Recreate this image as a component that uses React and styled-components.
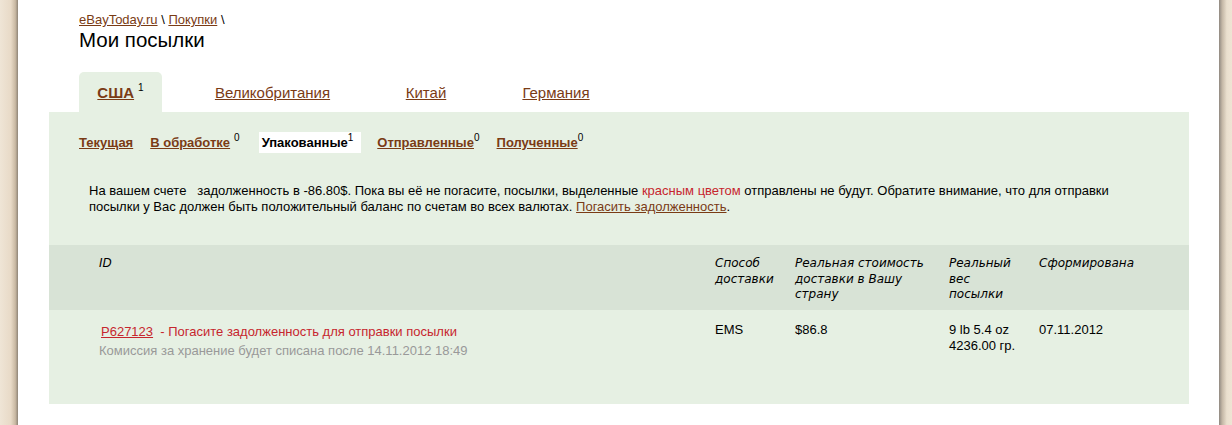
import React from 'react'
import styled, { createGlobalStyle } from 'styled-components'

const Global = createGlobalStyle`
  html, body { margin: 0; padding: 0; }
  body {
    font-family: "Liberation Sans", Arial, sans-serif;
    background: #ece0cf;
    width: 1232px;
    height: 425px;
    overflow: hidden;
  }
`

const Frame = styled.div`
  display: flex;
  height: 425px;
`

const Wood = styled.div`
  width: ${p => p.w}px;
  flex: none;
  background: linear-gradient(90deg, ${p => p.side === 'left'
    ? '#efe5d6 0%, #e8dac7 60%, #c9b9a3 85%, #8e8477 100%'
    : '#8f8880 0%, #c4b7a6 25%, #eadfce 60%, #efe4d4 100%'});
`

const Page = styled.div`
  flex: 1;
  background: #fff;
  padding: 12px 30px 0 31px;
`

const Crumbs = styled.div`
  font-size: 13px;
  color: #000;
  padding-left: 30px;
  line-height: 15px;
`

const Link = styled.a`
  color: ${p => p.red ? '#c6262e' : '#7a3b15'};
  text-decoration: underline;
  font-weight: ${p => p.bold ? 'bold' : 'inherit'};
  cursor: pointer;
`

const Title = styled.h1`
  margin: 1px 0 0;
  padding-left: 30px;
  font-size: 20.5px;
  font-weight: normal;
  line-height: 24px;
  color: #000;
`

const Tabs = styled.div`
  display: flex;
  margin-top: 20px;
  padding-left: 30px;
  height: 40px;
`

const Tab = styled.div`
  width: ${p => p.w}px;
  flex: none;
  display: flex;
  justify-content: center;
  align-items: flex-start;
  padding-top: 12px;
  box-sizing: border-box;
  font-size: 15px;
  line-height: 18px;
  background: ${p => p.active ? '#e6f0e3' : 'transparent'};
  border-radius: 5px 5px 0 0;
`

const Sup = styled.span`
  font-size: 10px;
  line-height: 10px;
  color: #000;
  font-weight: normal;
  margin-left: ${p => p.gap || 0}px;
  margin-top: ${p => p.top || 0}px;
`

const Panel = styled.div`
  background: #e6f0e3;
  height: 292px;
  display: flex;
  flex-direction: column;
`

const SubTabs = styled.div`
  display: flex;
  align-items: center;
  padding: 20px 0 0 30px;
  gap: 17px;
  font-size: 13px;
  font-weight: bold;
`

const SubTab = styled.div`
  display: flex;
  align-items: flex-start;
  height: 21px;
  line-height: 21px;
  padding: ${p => p.active ? '0 8px 0 3px' : '0'};
  background: ${p => p.active ? '#fff' : 'transparent'};
  color: #000;
  margin: ${p => p.active ? '0 -1px 0 2px' : '0'};
`

const Notice = styled.p`
  margin: 30px 0 0;
  padding: 0 64px 0 40px;
  font-size: 13px;
  line-height: 16px;
  color: #000;
`

const Red = styled.span`
  color: #c6262e;
`

const Grid = styled.div`
  display: grid;
  grid-template-columns: 666px 80px 154px 90px 1fr;
`

const HeadRow = styled(Grid)`
  margin-top: 30px;
  background: #d8e3d6;
  height: 65px;
  padding-top: 11px;
  box-sizing: border-box;
`

const HeadCell = styled.div`
  font-family: "DejaVu Sans", Verdana, sans-serif;
  font-style: italic;
  font-size: 12px;
  line-height: 15.5px;
  color: #000;
  padding-left: ${p => p.first ? 50 : 0}px;
  padding-right: ${p => p.pr || 6}px;
`

const BodyRow = styled(Grid)`
  padding-top: 12px;
`

const Cell = styled.div`
  font-size: 13px;
  line-height: 16px;
  color: #000;
  padding-left: ${p => p.first ? 52 : 0}px;
  padding-top: ${p => p.first ? 2 : 0}px;
`

const Gray = styled.div`
  color: #999;
  margin: 3px 0 0 -2px;
`

export default function App() {
  return (
    <>
      <Global />
      <Frame>
        <Wood w={18} side="left" />
        <Page>
          <Crumbs>
            <Link>eBayToday.ru</Link> \ <Link>Покупки</Link> \
          </Crumbs>
          <Title>Мои посылки</Title>
          <Tabs>
            <Tab w={83} active>
              <Link bold>США</Link><Sup gap={4} top={-1}>1</Sup>
            </Tab>
            <Tab w={221}><Link>Великобритания</Link></Tab>
            <Tab w={86}><Link>Китай</Link></Tab>
            <Tab w={174}><Link>Германия</Link></Tab>
          </Tabs>
          <Panel>
            <SubTabs>
              <SubTab><Link>Текущая</Link></SubTab>
              <SubTab><Link>В обработке</Link><Sup gap={4} top={1}>0</Sup></SubTab>
              <SubTab active>Упакованные<Sup top={1}>1</Sup></SubTab>
              <SubTab><Link>Отправленные</Link><Sup top={1}>0</Sup></SubTab>
              <SubTab><Link>Полученные</Link><Sup top={1}>0</Sup></SubTab>
            </SubTabs>
            <Notice>
              На вашем счете &nbsp; задолженность в -86.80$. Пока вы её не погасите, посылки, выделенные{' '}
              <Red>красным цветом</Red> отправлены не будут. Обратите внимание, что для отправки
              посылки у Вас должен быть положительный баланс по счетам во всех валютах.{' '}
              <Link>Погасить задолженность</Link>.
            </Notice>
            <HeadRow>
              <HeadCell first>ID</HeadCell>
              <HeadCell>Способ доставки</HeadCell>
              <HeadCell>Реальная стоимость доставки в Вашу страну</HeadCell>
              <HeadCell pr={20}>Реальный вес посылки</HeadCell>
              <HeadCell>Сформирована</HeadCell>
            </HeadRow>
            <BodyRow>
              <Cell first>
                <Red><Link red>P627123</Link>&nbsp; - Погасите задолженность для отправки посылки</Red>
                <Gray>Комиссия за хранение будет списана после 14.11.2012 18:49</Gray>
              </Cell>
              <Cell>EMS</Cell>
              <Cell>$86.8</Cell>
              <Cell>9 lb 5.4 oz<br />4236.00 гр.</Cell>
              <Cell>07.11.2012</Cell>
            </BodyRow>
          </Panel>
        </Page>
        <Wood w={13} side="right" />
      </Frame>
    </>
  )
}
